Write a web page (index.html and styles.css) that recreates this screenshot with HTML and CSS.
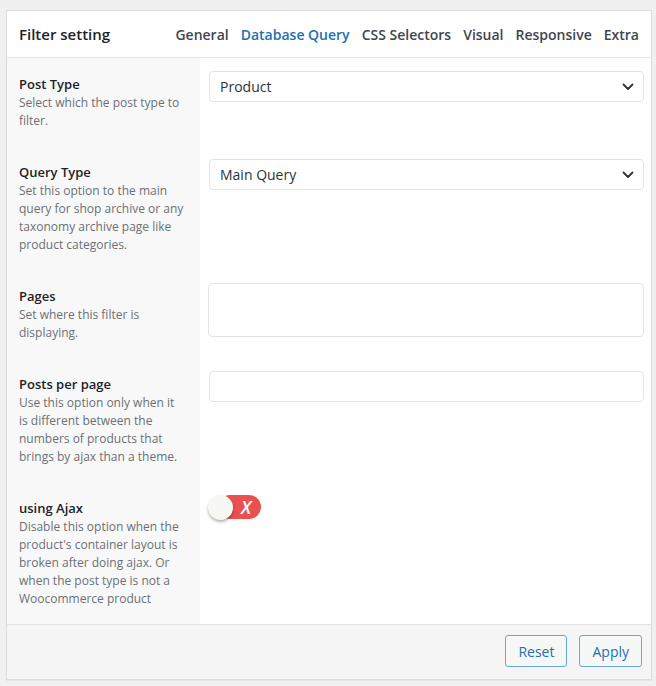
FILE: index.html
```html
<!DOCTYPE html>
<html>
<head>
<meta charset="utf-8">
<link rel="stylesheet" href="styles.css">
</head>
<body>
<div class="panel">
  <div class="header">
    <div class="title">Filter setting</div>
    <nav class="tabs">
      <span class="tab">General</span>
      <span class="tab active">Database Query</span>
      <span class="tab">CSS Selectors</span>
      <span class="tab">Visual</span>
      <span class="tab">Responsive</span>
      <span class="tab">Extra</span>
    </nav>
  </div>
  <div class="body">
    <div class="row">
      <div class="info">
        <div class="label">Post Type</div>
        <div class="desc">Select which the post type to filter.</div>
      </div>
      <div class="control">
        <div class="select"><span>Product</span>
          <svg class="chev" width="12" height="8" viewBox="0 0 12 8"><path d="M1.5 1.5 L6 6 L10.5 1.5" fill="none" stroke="#2c3338" stroke-width="1.8" stroke-linecap="round" stroke-linejoin="round"/></svg>
        </div>
      </div>
    </div>
    <div class="row">
      <div class="info">
        <div class="label">Query Type</div>
        <div class="desc">Set this option to the main query for shop archive or any taxonomy archive page like product categories.</div>
      </div>
      <div class="control">
        <div class="select"><span>Main Query</span>
          <svg class="chev" width="12" height="8" viewBox="0 0 12 8"><path d="M1.5 1.5 L6 6 L10.5 1.5" fill="none" stroke="#2c3338" stroke-width="1.8" stroke-linecap="round" stroke-linejoin="round"/></svg>
        </div>
      </div>
    </div>
    <div class="row">
      <div class="info">
        <div class="label">Pages</div>
        <div class="desc">Set where this filter is displaying.</div>
      </div>
      <div class="control">
        <div class="textarea"></div>
      </div>
    </div>
    <div class="row">
      <div class="info">
        <div class="label">Posts per page</div>
        <div class="desc">Use this option only when it is different between the numbers of products that brings by ajax than a theme.</div>
      </div>
      <div class="control">
        <div class="input"></div>
      </div>
    </div>
    <div class="row">
      <div class="info">
        <div class="label">using Ajax</div>
        <div class="desc">Disable this option when the product's container layout is broken after doing ajax. Or when the post type is not a Woocommerce product</div>
      </div>
      <div class="control">
        <div class="toggle"><span class="knob"></span><span class="x">X</span></div>
      </div>
    </div>
  </div>
  <div class="footer">
    <button class="btn">Reset</button>
    <button class="btn">Apply</button>
  </div>
</div>
</body>
</html>
```
FILE: styles.css
```css
* { box-sizing: border-box; }
html, body { margin: 0; padding: 0; }
body {
  background: #f0f0f0;
  font-family: "Open Sans", "Noto Sans", sans-serif;
  color: #1d2327;
  padding: 10px 4px 6px 6px;
}
.panel {
  width: 646px;
  border: 1px solid #dcdcde;
  background: #fff;
  box-shadow: 0 1px 1px rgba(0,0,0,0.04);
}
.header {
  height: 47px;
  display: flex;
  align-items: center;
  justify-content: space-between;
  padding: 0 12px 0 12px;
  border-bottom: 1px solid #e6e6e6;
}
.title {
  font-size: 15px;
  font-weight: 600;
  color: #1d2327;
}
.tabs { display: flex; gap: 12px; }
.tab {
  font-size: 14px;
  font-weight: 600;
  color: #3f464d;
}
.tab.active { color: #2271b1; }
.body { display: flex; flex-direction: column; }
.row { display: flex; }
.info {
  width: 193px;
  flex: none;
  background: #f8f8f8;
  padding: 16px 15px 16px 12px;
}
.label {
  font-size: 13px;
  font-weight: 600;
  line-height: 20px;
  color: #1d2327;
}
.desc {
  font-size: 12px;
  line-height: 18px;
  color: #6b7075;
}
.control {
  flex: 1;
  padding: 13px 7px 13px 8px;
}
.select {
  height: 31px;
  border: 1px solid #e4e4e4;
  border-radius: 4px;
  display: flex;
  align-items: center;
  justify-content: space-between;
  padding: 0 9px 0 10px;
  font-size: 14px;
  color: #2c3338;
  margin-left: 1px;
}
.textarea {
  height: 54px;
  border: 1px solid #e4e4e4;
  border-radius: 4px;
}
.input {
  height: 31px;
  border: 1px solid #e4e4e4;
  border-radius: 4px;
  margin-left: 1px;
}
.toggle {
  position: relative;
  width: 53px;
  height: 24px;
}
.toggle::before {
  content: "";
  position: absolute;
  left: 10px; top: 0; right: 0; bottom: 0;
  background: #e9504f;
  border-radius: 12px;
}
.knob {
  position: absolute;
  left: 0; top: 0;
  width: 25px; height: 25px;
  border-radius: 50%;
  background: #f8f8f2;
  box-shadow: 0 2px 3px rgba(0,0,0,0.3);
}
.x {
  position: absolute;
  left: 33px; top: 0;
  line-height: 25px;
  font-size: 18px;
  font-weight: 600;
  font-style: italic;
  color: #fff;
  font-family: "Open Sans", sans-serif;
}
.footer {
  border-top: 1px solid #e2e2e2;
  background: #f5f5f5;
  height: 55px;
  display: flex;
  justify-content: flex-end;
  align-items: flex-start;
  gap: 12px;
  padding: 10px 9px 0 0;
}
.btn {
  height: 32px;
  padding: 0 12px;
  border: 1px solid #6aa6db;
  border-radius: 3px;
  background: #f6f7f7;
  color: #2271b1;
  font-family: "Open Sans", sans-serif;
  font-size: 14px;
}
```
